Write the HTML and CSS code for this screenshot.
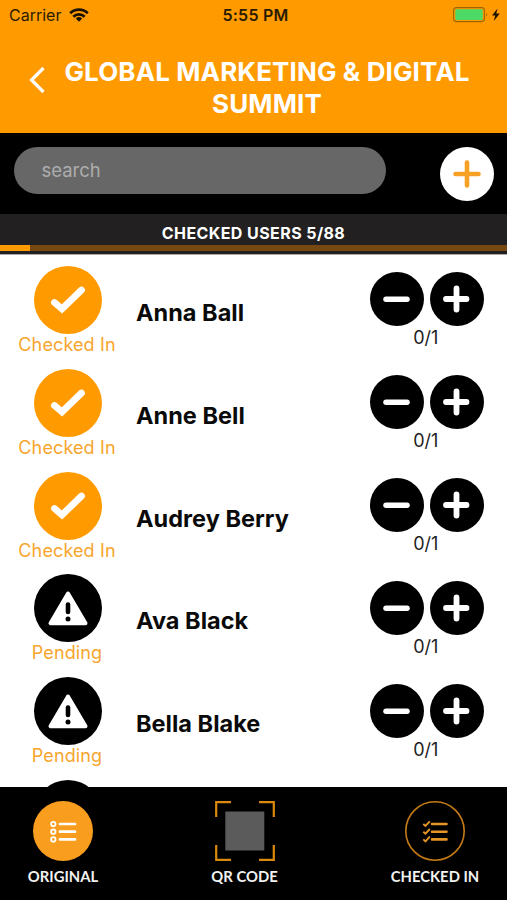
FILE: index.html
```html
<!DOCTYPE html>
<html lang="en">
<head>
<meta charset="utf-8">
<title>Global Marketing &amp; Digital Summit</title>
<link rel="stylesheet" href="styles.css">
</head>
<body>
<svg class="defs" width="0" height="0" aria-hidden="true">
  <symbol id="check" viewBox="0 0 68 68"><path d="M20.500 36.500 28 43 47.500 24" fill="none" stroke="#fff" stroke-width="6.800" stroke-linecap="round" stroke-linejoin="miter"/></symbol>
  <symbol id="warn" viewBox="0 0 68 68"><path d="M34 19.500 16.500 49.300H51.500Z" fill="#fff" stroke="#fff" stroke-width="4" stroke-linejoin="round"/><path d="M34 30.500V38" stroke="#000" stroke-width="4.600" stroke-linecap="round"/><circle cx="34" cy="45" r="2.500"/></symbol>
  <symbol id="minus" viewBox="0 0 54 54"><path d="M16 27.300H37" stroke="#fff" stroke-width="5.500" stroke-linecap="round"/></symbol>
  <symbol id="plus" viewBox="0 0 54 54"><path d="M16 27H36.500M26.500 16.500V37.500" stroke="#fff" stroke-width="5.800" stroke-linecap="round"/></symbol>
</svg>
<div class="app">
  <header class="header">
    <div class="status">
      <div class="status-left"><span class="carrier">Carrier</span>
        <svg width="20" height="14" viewBox="0 0 20 14" fill="none" stroke="#1c1200" stroke-width="2.700"><path d="M1.200 5.300a12.600 12.600 0 0 1 17.600 0M4.300 8.700a8.200 8.200 0 0 1 11.400 0"/><path d="M10 13.700 6.800 10.500a4.700 4.700 0 0 1 6.400 0Z" fill="#1c1200" stroke="none"/></svg>
      </div>
      <span class="time">5:55 PM</span>
      <div class="status-right">
        <svg width="49" height="16" viewBox="0 0 49 16"><rect x=".6" y=".6" width="30.800" height="14" rx="3" fill="none" stroke="#9c6500" stroke-width="1.100"/><rect x="2.300" y="2.300" width="27.400" height="10.600" rx="1.200" fill="#4cd964"/><path d="M33.300 5.500q1.800 2.100 0 4.200z" fill="#9c6500"/><path d="M44.500 1.500 39 8.500h3.200L40.800 14l6-7.500h-3.500z" fill="#1c1200"/></svg>
      </div>
    </div>
    <div class="titlebar">
      <svg class="back" width="18" height="28" viewBox="0 0 18 28" fill="none" stroke="#fff" stroke-width="3.200"><path d="M15.500 2 3.500 14 15.500 26"/></svg>
      <h1 class="title">GLOBAL MARKETING &amp; DIGITAL<br>SUMMIT</h1>
    </div>
  </header>
  <section class="search-row">
    <div class="search"><span>search</span></div>
    <div class="add"><svg width="54" height="54" viewBox="0 0 54 54"><path d="M15.500 27H38.500M27 15.500V38.500" stroke="#f7a124" stroke-width="4.600" stroke-linecap="round"/></svg></div>
  </section>
  <section class="progress">
    <div class="progress-label"><span>CHECKED USERS 5/88</span></div>
    <div class="bar"><div class="fill" style="width:5.900%"></div></div>
  </section>
  <main class="list">
    <div class="row">
      <div class="state"><svg class="badge in"><use href="#check"/></svg><span class="label">Checked In</span></div>
      <div class="name"><span>Anna Ball</span></div>
      <div class="counter"><div class="buttons"><svg><use href="#minus"/></svg><svg><use href="#plus"/></svg></div><span class="count">0/1</span></div>
    </div>
    <div class="row">
      <div class="state"><svg class="badge in"><use href="#check"/></svg><span class="label">Checked In</span></div>
      <div class="name"><span>Anne Bell</span></div>
      <div class="counter"><div class="buttons"><svg><use href="#minus"/></svg><svg><use href="#plus"/></svg></div><span class="count">0/1</span></div>
    </div>
    <div class="row">
      <div class="state"><svg class="badge in"><use href="#check"/></svg><span class="label">Checked In</span></div>
      <div class="name"><span>Audrey Berry</span></div>
      <div class="counter"><div class="buttons"><svg><use href="#minus"/></svg><svg><use href="#plus"/></svg></div><span class="count">0/1</span></div>
    </div>
    <div class="row">
      <div class="state"><svg class="badge"><use href="#warn"/></svg><span class="label pending">Pending</span></div>
      <div class="name"><span>Ava Black</span></div>
      <div class="counter"><div class="buttons"><svg><use href="#minus"/></svg><svg><use href="#plus"/></svg></div><span class="count">0/1</span></div>
    </div>
    <div class="row">
      <div class="state"><svg class="badge"><use href="#warn"/></svg><span class="label pending">Pending</span></div>
      <div class="name"><span>Bella Blake</span></div>
      <div class="counter"><div class="buttons"><svg><use href="#minus"/></svg><svg><use href="#plus"/></svg></div><span class="count">0/1</span></div>
    </div>
  </main>
  <nav class="tabs">
    <svg class="next-badge" width="68" height="8" viewBox="0 0 68 8"><circle cx="34" cy="34" r="34"/></svg>
    <div class="tab">
      <svg width="60" height="60" viewBox="0 0 60 60"><circle cx="30" cy="30" r="30" fill="#f99d1f"/><g fill="none" stroke="#fff" stroke-width="1.800"><circle cx="20.300" cy="23" r="2.200"/><circle cx="20.300" cy="30.700" r="2.200"/><circle cx="20.300" cy="38.400" r="2.200"/></g><path d="M27 23H42M27 30.700H42M27 38.400H42" stroke="#fff" stroke-width="2.700" stroke-linecap="round"/></svg>
      <span class="tab-label">ORIGINAL</span>
    </div>
    <div class="tab">
      <svg width="60" height="60" viewBox="0 0 60 60"><path d="M1.200 16V1.200H16M44 1.200H58.800V16M58.800 44V58.800H44M16 58.800H1.200V44" fill="none" stroke="#d98a0c" stroke-width="2.200"/><rect x="10.300" y="10.500" width="39" height="39" fill="#5b5b5b"/></svg>
      <span class="tab-label">QR CODE</span>
    </div>
    <div class="tab">
      <svg width="60" height="60" viewBox="0 0 60 60"><circle cx="30" cy="30" r="29.200" fill="none" stroke="#c47b16" stroke-width="1.600"/><g fill="none" stroke="#e59527"><path d="M27 23H41.500M27 30.700H41.500M27 38.400H41.500" stroke-width="2.600" stroke-linecap="round"/><path d="M18.300 23 20.500 25 24.800 20.300M18.300 30.700 20.500 32.700 24.800 28M18.300 38.400 20.500 40.400 24.800 35.700" stroke-width="1.900"/></g></svg>
      <span class="tab-label">CHECKED IN</span>
    </div>
  </nav>
</div>
</body>
</html>
```
FILE: styles.css
```css
* { box-sizing: border-box; }
body { margin: 0; background: #fff; font-family: Inter, "Liberation Sans", sans-serif; }
svg { display: block; flex: none; }
.defs { position: absolute; }
.app { width: 507px; height: 900px; display: flex; flex-direction: column; overflow: hidden; }
span { white-space: nowrap; }

.header { height: 133px; flex: none; background: #ff9b00; }
.status { height: 30px; display: grid; grid-template-columns: 1fr auto 1fr; align-items: center; padding: 0 5px 0 9px; color: #2a1b00; font-size: 16px; }
.status-left { display: flex; align-items: center; gap: 8px; }
.status-right { display: flex; justify-content: flex-end; }
.time { font-weight: 600; letter-spacing: .25px; }
.titlebar { display: flex; height: 103px; }
.back { margin: 36px 0 0 28px; }
.title { margin: 26px 0 0 16px; width: 410px; text-align: center; color: #fff; font-size: 26px; line-height: 32px; font-weight: 700; letter-spacing: .1px; white-space: nowrap; }
.title::first-line { letter-spacing: .12px; }

.search-row { height: 81px; flex: none; background: #000; display: flex; justify-content: space-between; padding: 13.500px 13.500px 0 14px; }
.search { width: 372px; height: 47px; border-radius: 24px; background: #676767; color: #adadad; font-size: 18.500px; line-height: 46px; padding-left: 27.500px; }
.add { width: 54px; height: 54px; border-radius: 50%; background: #fff; }

.progress { height: 41px; flex: none; background: #232021; border-bottom: 1px solid #aaa; }
.progress-label { height: 31px; padding-top: 4px; line-height: 31px; text-align: center; color: #fff; font-size: 16px; font-weight: 700; letter-spacing: .42px; }
.bar { height: 6px; background: #77480f; }
.fill { height: 6px; background: #ff9b00; }

.list { height: 532px; flex: none; padding-top: 10.800px; overflow: hidden; }
.row { height: 102.900px; display: flex; }
.state { width: 136px; padding-right: 2px; display: flex; flex-direction: column; align-items: center; }
.badge { width: 68px; height: 68px; border-radius: 50%; background: #000; margin-left: 1px; }
.badge.in { background: #ff9b00; }
.label { line-height: 22.500px; font-size: 18px; color: #f7a52c; letter-spacing: .12px; }
.name { width: 234px; line-height: 93px; font-size: 23.500px; font-weight: 700; color: #0a0a0a; letter-spacing: .02px; }
.counter { width: 113.500px; padding-top: 6.500px; display: flex; flex-direction: column; align-items: center; }
.buttons { display: flex; gap: 5.500px; }
.buttons svg { width: 54px; height: 54px; border-radius: 50%; background: #000; }
.count { line-height: 24.500px; font-size: 18px; color: #222; padding-right: 2px; }

.tabs { position: relative; height: 113px; flex: none; background: #000; display: flex; justify-content: space-between; padding: 14.400px 27px 0 27px; }
.next-badge { position: absolute; left: 34px; top: -7px; }
.tab { display: flex; flex-direction: column; align-items: center; }
.tab:nth-of-type(1) { width: 72px; }
.tab:nth-of-type(2) { width: 66px; }
.tab:nth-of-type(3) { width: 90px; }
.tab-label { margin-top: 5px; line-height: 20px; font-family: Lato, Inter, sans-serif; font-size: 14.800px; font-weight: 700; color: #f2f2f2; }
```
